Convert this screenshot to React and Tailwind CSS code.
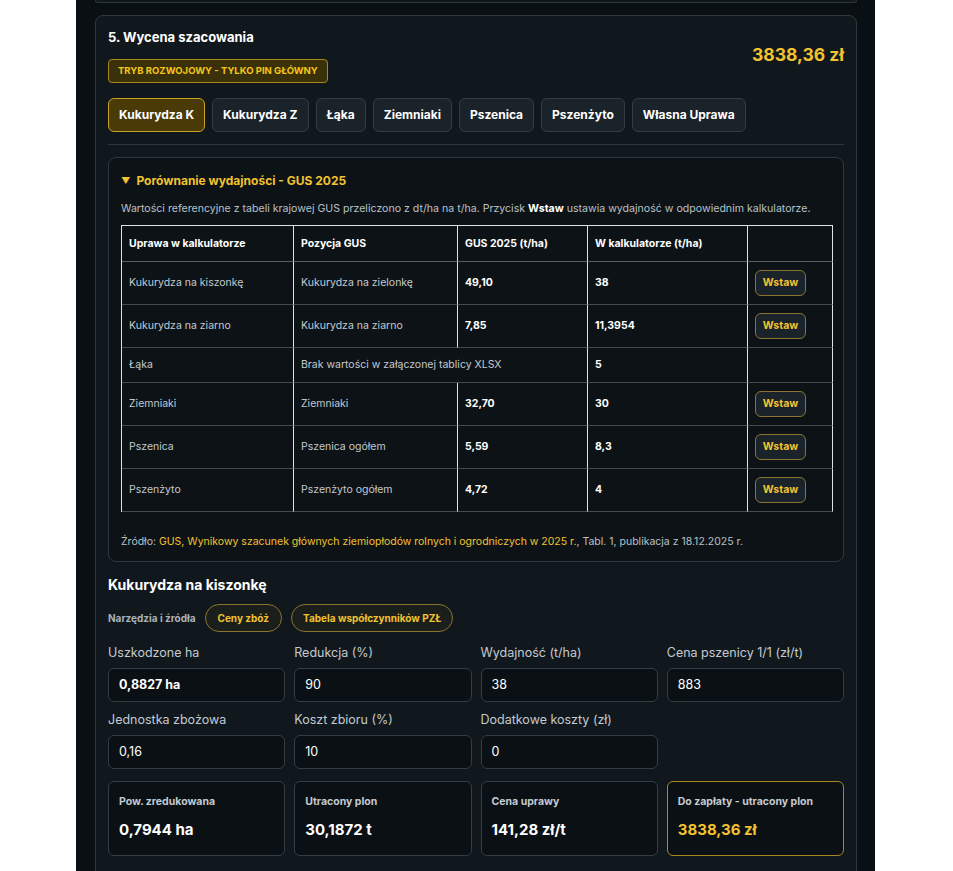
import { useState } from 'react';

const tabs = ['Kukurydza K', 'Kukurydza Z', 'Łąka', 'Ziemniaki', 'Pszenica', 'Pszenżyto', 'Własna Uprawa'];

const gusRows = [
  { crop: 'Kukurydza na kiszonkę', gus: 'Kukurydza na zielonkę', value: '49,10', calc: '38', insert: true },
  { crop: 'Kukurydza na ziarno', gus: 'Kukurydza na ziarno', value: '7,85', calc: '11,3954', insert: true },
  { crop: 'Łąka', gus: 'Brak wartości w załączonej tablicy XLSX', value: null, calc: '5', insert: false },
  { crop: 'Ziemniaki', gus: 'Ziemniaki', value: '32,70', calc: '30', insert: true },
  { crop: 'Pszenica', gus: 'Pszenica ogółem', value: '5,59', calc: '8,3', insert: true },
  { crop: 'Pszenżyto', gus: 'Pszenżyto ogółem', value: '4,72', calc: '4', insert: true },
];

const inputs = [
  { label: 'Uszkodzone ha', value: '0,8827 ha', bold: true },
  { label: 'Redukcja (%)', value: '90' },
  { label: 'Wydajność (t/ha)', value: '38' },
  { label: 'Cena pszenicy 1/1 (zł/t)', value: '883' },
  { label: 'Jednostka zbożowa', value: '0,16' },
  { label: 'Koszt zbioru (%)', value: '10' },
  { label: 'Dodatkowe koszty (zł)', value: '0' },
];

const results = [
  { label: 'Pow. zredukowana', value: '0,7944 ha' },
  { label: 'Utracony plon', value: '30,1872 t' },
  { label: 'Cena uprawy', value: '141,28 zł/t' },
  { label: 'Do zapłaty - utracony plon', value: '3838,36 zł', highlight: true },
];

function InsertButton() {
  return (
    <button className="h-[26px] w-[51px] rounded-md border border-[#8a7430] bg-[#1a232a] text-[10.5px] font-bold text-[#f2c230]">
      Wstaw
    </button>
  );
}

function GusTable() {
  const th = 'border-r border-b border-r-[#dfe3e6] border-b-[#52606a] px-[7px] py-[9px] text-left text-[10.5px] font-bold leading-[17px] text-white';
  const td = 'border-r border-b border-r-[#dfe3e6] border-b-[#3f4c56] px-[7px] py-2 text-[10.5px] leading-[18px]';
  return (
    <table className="mt-[8px] w-[711px] table-fixed border-separate border-spacing-0 border-t border-l border-[#dfe3e6]">
      <colgroup>
        <col className="w-[172px]" />
        <col className="w-[164px]" />
        <col className="w-[130px]" />
        <col className="w-[160px]" />
        <col className="w-[85px]" />
      </colgroup>
      <thead>
        <tr>
          <th className={th}>Uprawa w kalkulatorze</th>
          <th className={th}>Pozycja GUS</th>
          <th className={th}>GUS 2025 (t/ha)</th>
          <th className={th}>W kalkulatorze (t/ha)</th>
          <th className={th}></th>
        </tr>
      </thead>
      <tbody>
        {gusRows.map((row) => (
          <tr key={row.crop}>
            <td className={`${td} text-[#c3cad0]`}>{row.crop}</td>
            {row.value ? (
              <>
                <td className={`${td} text-[#c3cad0]`}>{row.gus}</td>
                <td className={`${td} font-bold text-white`}>{row.value}</td>
              </>
            ) : (
              <td colSpan={2} className={`${td} text-[#c3cad0]`}>{row.gus}</td>
            )}
            <td className={`${td} font-bold text-white`}>{row.calc}</td>
            <td className={td}>{row.insert && <InsertButton />}</td>
          </tr>
        ))}
      </tbody>
    </table>
  );
}

export default function App() {
  const [active, setActive] = useState(0);

  return (
    <div className="min-h-[871px] bg-white" style={{ fontFamily: 'Inter, "Noto Sans", sans-serif' }}>
      <div className="ml-[76px] min-h-[871px] w-[799px] bg-[#0a0f13] px-[19px] pr-[18px]">
        {/* bottom edge of the previous section */}
        <div className="h-[3px] rounded-b-lg border-x border-b border-[#2c3840] bg-[#11181d]" />

        <div className="mt-3 rounded-lg border border-[#2c3840] bg-[#11181d] px-3 pb-10 pt-[12px]">
          <div className="flex items-center justify-between">
            <div>
              <h2 className="text-[13px] font-bold leading-[18px] text-white">5. Wycena szacowania</h2>
              <div className="mt-[13px] inline-block rounded border border-[#a8881e] bg-[#3a300a] px-[9px] py-[5px] text-[9.5px] font-bold leading-[12px] text-[#f5c518]">
                TRYB ROZWOJOWY - TYLKO PIN GŁÓWNY
              </div>
            </div>
            <div className="text-[17.5px] font-bold text-[#f2c230]">3838,36 zł</div>
          </div>

          <div className="mt-[15px] flex gap-[7px]">
            {tabs.map((t, i) => (
              <button
                key={t}
                onClick={() => setActive(i)}
                className={
                  i === active
                    ? 'h-[34px] rounded-md border border-[#c9a227] bg-[#4a3a08] px-[10px] text-[12px] font-bold text-white'
                    : 'h-[34px] rounded-md border border-[#323e47] bg-[#1a232a] px-[10px] text-[12px] font-bold text-white'
                }
              >
                {t}
              </button>
            ))}
          </div>

          <div className="mt-3 border-t border-[#2c3840]" />

          <div className="mt-3 rounded-lg border border-[#2c3840] bg-[#0c1216] px-3 pb-[11px] pt-[14px]">
            <div className="flex items-center gap-[6px] text-[12px] font-bold text-[#f2c230]">
              <span className="text-[9px]">▼</span>
              <span>Porównanie wydajności - GUS 2025</span>
            </div>
            <p className="mt-[11px] whitespace-nowrap text-[10.6px] leading-[16px] text-[#b9c1c8]">
              Wartości referencyjne z tabeli krajowej GUS przeliczono z dt/ha na t/ha. Przycisk{' '}
              <span className="font-bold text-white">Wstaw</span> ustawia wydajność w odpowiednim kalkulatorze.
            </p>
            <GusTable />
            <p className="mt-[22px] text-[10.5px] leading-[16px] text-[#b9c1c8]">
              Źródło:{' '}
              <span className="text-[#f2c230]">
                GUS, Wynikowy szacunek głównych ziemiopłodów rolnych i ogrodniczych w 2025 r.
              </span>
              , Tabl. 1, publikacja z 18.12.2025 r.
            </p>
          </div>

          <h3 className="mt-[13px] text-[14px] font-bold leading-[20px] text-white">Kukurydza na kiszonkę</h3>

          <div className="mt-[9px] flex items-center gap-[9px]">
            <span className="text-[10px] font-bold text-[#aab3ba]">Narzędzia i źródła</span>
            <span className="rounded-full border border-[#8a7430] bg-[#1a1f1c] px-[12px] py-[6px] text-[10px] font-bold leading-[14px] text-[#f2c230]">
              Ceny zbóż
            </span>
            <span className="rounded-full border border-[#8a7430] bg-[#1a1f1c] px-[11px] py-[6px] text-[10px] font-bold leading-[14px] text-[#f2c230]">
              Tabela współczynników PZŁ
            </span>
          </div>

          <div className="mt-[13px] grid grid-cols-4 gap-x-[9px] gap-y-[10px]">
            {inputs.map((f) => (
              <div key={f.label}>
                <div className="text-[12.5px] leading-[16px] text-[#c3cad0]">{f.label}</div>
                <div
                  className={`mt-[7px] flex h-[34px] items-center rounded-md border border-[#323e47] bg-[#0b1014] px-[10px] text-[12.5px] text-white ${f.bold ? 'font-bold' : ''}`}
                >
                  {f.value}
                </div>
              </div>
            ))}
          </div>

          <div className="mt-[12px] grid grid-cols-4 gap-[9px]">
            {results.map((r) => (
              <div
                key={r.label}
                className={`h-[75px] rounded-md border bg-[#0b1014] px-[10px] pt-[13px] ${r.highlight ? 'border-[#a8881e]' : 'border-[#323e47]'}`}
              >
                <div className="text-[10.5px] font-bold leading-[14px] text-[#c3cad0]">{r.label}</div>
                <div className={`mt-[11px] text-[15px] font-bold leading-[20px] ${r.highlight ? 'text-[#f2c230]' : 'text-white'}`}>
                  {r.value}
                </div>
              </div>
            ))}
          </div>
        </div>
      </div>
    </div>
  );
}
